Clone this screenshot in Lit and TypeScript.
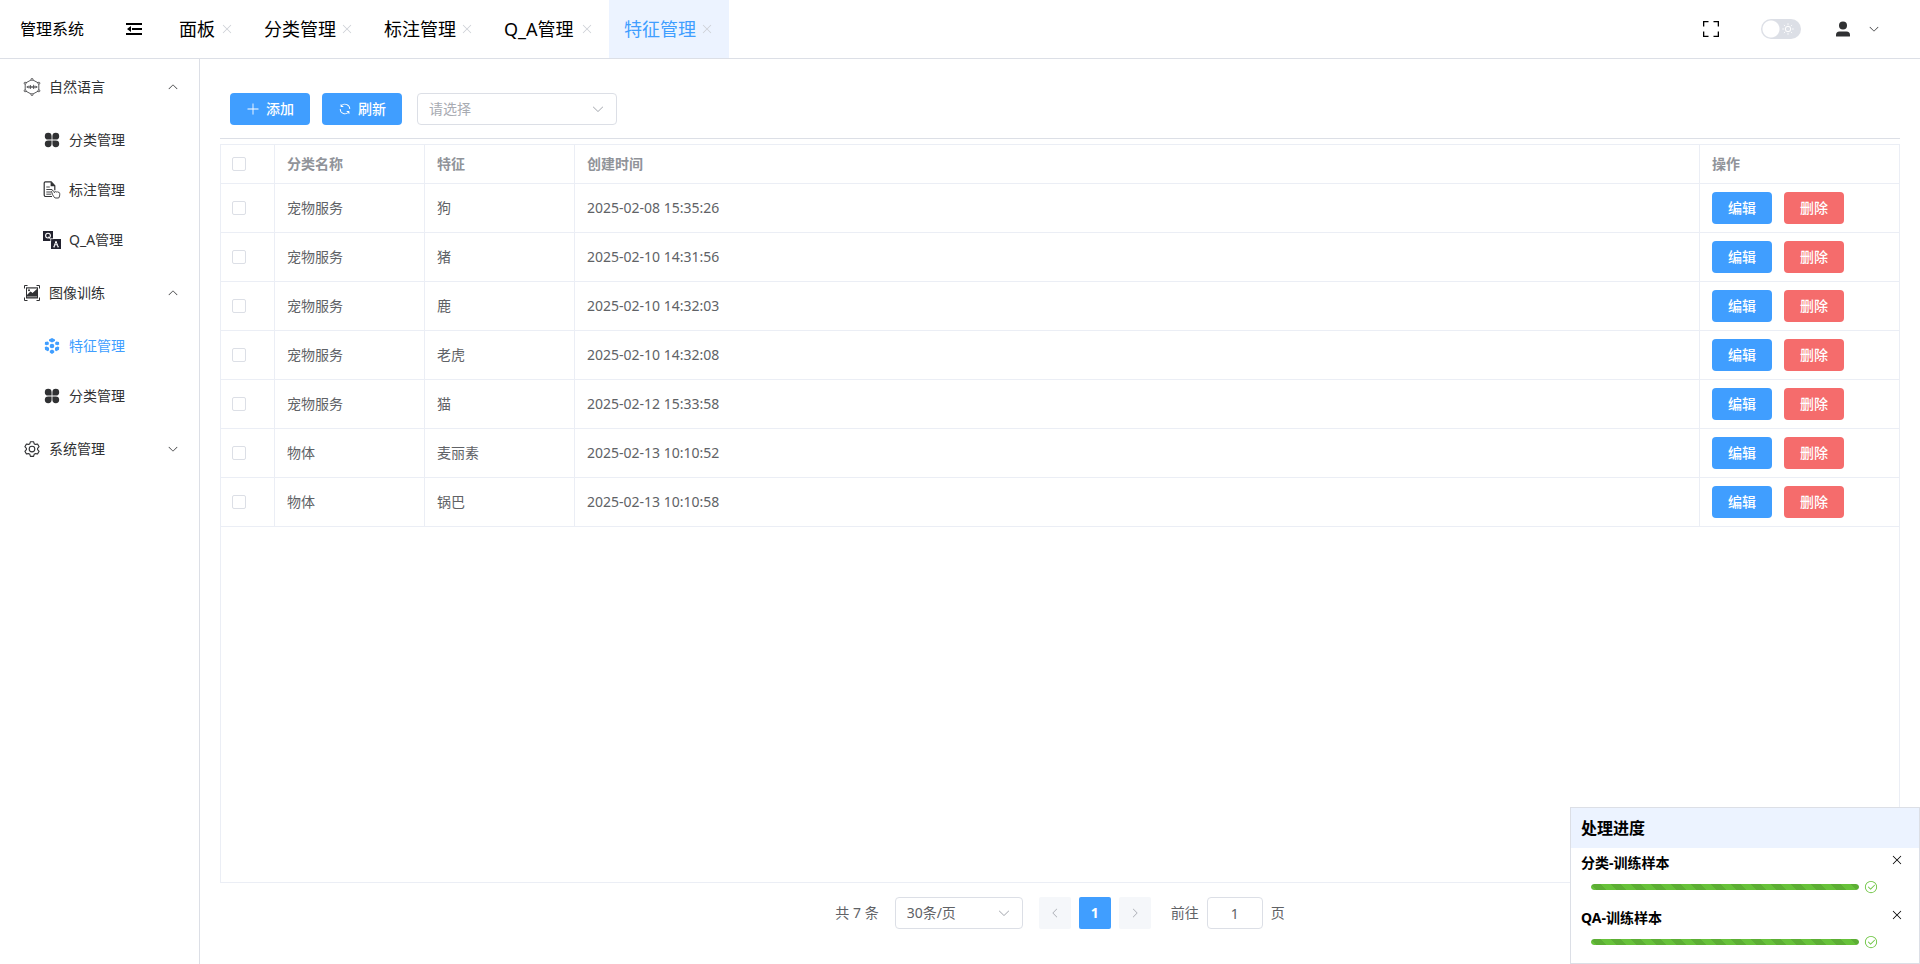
import { LitElement, html, css, svg, nothing, type TemplateResult } from "lit";
import { customElement, property, state } from "lit/decorators.js";

const ICONS: Record<string, { box: string; body: TemplateResult }> = {
  plus: { box: "0 0 1024 1024", body: svg`<path d="M480 480V128a32 32 0 0 1 64 0v352h352a32 32 0 1 1 0 64H544v352a32 32 0 1 1-64 0V544H128a32 32 0 0 1 0-64h352z"/>` },
  refresh: { box: "0 0 1024 1024", body: svg`<path d="M771.776 794.88A384 384 0 0 1 128 512h64a320 320 0 0 0 555.712 216.448H654.72a32 32 0 1 1 0-64h149.056a32 32 0 0 1 32 32v148.928a32 32 0 1 1-64 0v-50.56zM276.288 295.616h92.992a32 32 0 0 1 0 64H220.16a32 32 0 0 1-32-32V178.56a32 32 0 0 1 64 0v50.56A384 384 0 0 1 896.128 512h-64a320 320 0 0 0-555.776-216.384z"/>` },
  down: { box: "0 0 1024 1024", body: svg`<path d="M831.872 340.864 512 652.672 192.128 340.864a30.592 30.592 0 0 0-42.752 0 29.12 29.12 0 0 0 0 41.6L489.664 714.24a32 32 0 0 0 44.672 0l340.288-331.712a29.12 29.12 0 0 0 0-41.728 30.592 30.592 0 0 0-42.752 0z"/>` },
  up: { box: "0 0 1024 1024", body: svg`<path d="M831.872 683.136 512 371.328 192.128 683.136a30.592 30.592 0 0 1-42.752 0 29.12 29.12 0 0 1 0-41.6L489.664 309.76a32 32 0 0 1 44.672 0l340.288 331.712a29.12 29.12 0 0 1 0 41.728 30.592 30.592 0 0 1-42.752 0z"/>` },
  left: { box: "0 0 1024 1024", body: svg`<path d="M683.136 831.872 371.328 512 683.136 192.128a30.592 30.592 0 0 0 0-42.752 29.12 29.12 0 0 0-41.6 0L309.76 489.664a32 32 0 0 0 0 44.672l331.712 340.288a29.12 29.12 0 0 0 41.728 0 30.592 30.592 0 0 0 0-42.752z"/>` },
  right: { box: "0 0 1024 1024", body: svg`<path d="M340.864 831.872 652.672 512 340.864 192.128a30.592 30.592 0 0 1 0-42.752 29.12 29.12 0 0 1 41.6 0L714.24 489.664a32 32 0 0 1 0 44.672L382.528 874.624a29.12 29.12 0 0 1-41.728 0 30.592 30.592 0 0 1 0-42.752z"/>` },
  close: { box: "0 0 1024 1024", body: svg`<path d="M764.288 214.592 512 466.88 259.712 214.592a31.936 31.936 0 0 0-45.12 45.12L466.752 512 214.528 764.224a31.936 31.936 0 1 0 45.12 45.184L512 557.184l252.288 252.288a31.936 31.936 0 0 0 45.12-45.12L557.12 512.064l252.288-252.352a31.936 31.936 0 1 0-45.12-45.184z"/>` },
  check: { box: "0 0 1024 1024", body: svg`<path d="M512 896a384 384 0 1 0 0-768 384 384 0 0 0 0 768m0 64a448 448 0 1 1 0-896 448 448 0 0 1 0 896"/><path d="M745.344 361.344a32 32 0 0 1 45.312 45.312l-288 288a32 32 0 0 1-45.312 0l-160-160a32 32 0 1 1 45.312-45.312L480 626.752z"/>` },
  setting: { box: "0 0 1024 1024", body: svg`<path d="M600.704 64a32 32 0 0 1 30.464 22.208l35.2 109.376c14.784 7.232 28.928 15.36 42.432 24.512l112.384-24.192a32 32 0 0 1 34.432 15.36L944.32 364.8a32 32 0 0 1-4.032 37.504l-77.12 85.12a357.12 357.12 0 0 1 0 49.024l77.12 85.248a32 32 0 0 1 4.032 37.504l-88.704 153.6a32 32 0 0 1-34.432 15.296L708.8 803.904c-13.44 9.088-27.648 17.28-42.368 24.512l-35.264 109.376A32 32 0 0 1 600.704 960H423.296a32 32 0 0 1-30.464-22.208L357.696 828.48a351.616 351.616 0 0 1-42.56-24.64l-112.32 24.256a32 32 0 0 1-34.432-15.36L79.68 659.2a32 32 0 0 1 4.032-37.504l77.12-85.248a357.12 357.12 0 0 1 0-48.896l-77.12-85.248A32 32 0 0 1 79.68 364.8l88.704-153.6a32 32 0 0 1 34.432-15.296l112.32 24.256c13.568-9.152 27.776-17.408 42.56-24.64l35.2-109.312A32 32 0 0 1 423.232 64H600.64zm-23.424 64H446.72l-36.352 113.088-24.512 11.968a294.113 294.113 0 0 0-34.816 20.096l-22.656 15.36-116.224-25.088-65.28 113.152 79.68 88.192-1.92 27.136a293.12 293.12 0 0 0 0 40.192l1.92 27.136-79.808 88.192 65.344 113.152 116.224-25.024 22.656 15.296a294.113 294.113 0 0 0 34.816 20.096l24.512 11.968L446.72 896h130.688l36.48-113.152 24.448-11.904a288.282 288.282 0 0 0 34.752-20.096l22.592-15.296 116.288 25.024 65.28-113.152-79.744-88.192 1.92-27.136a293.12 293.12 0 0 0 0-40.256l-1.92-27.136 79.808-88.128-65.344-113.152-116.288 24.96-22.592-15.232a287.616 287.616 0 0 0-34.752-20.096l-24.448-11.904L577.344 128zM512 320a192 192 0 1 1 0 384 192 192 0 0 1 0-384zm0 64a128 128 0 1 0 0 256 128 128 0 0 0 0-256z"/>` },
  fold: { box: "0 0 16 16", body: svg`<path d="M0 2h16v2H0zM6 7h10v2H6zM0 12h16v2H0zM1 8l4-3v6z"/>` },
  fullscreen: { box: "0 0 16 16", body: svg`<path d="M0 0h5.500v1.300H1.300V5.500H0zM10.500 0H16v5.500h-1.300V1.300h-4.200zM0 10.500h1.300v4.200h4.200V16H0zM14.700 10.500H16V16h-5.500v-1.300h4.200z"/>` },
  user: { box: "0 0 16 16", body: svg`<circle cx="8" cy="4.500" r="4"/><path d="M4.500 10.500h7A3.500 3.500 0 0 1 15 14v1a.6.6 0 0 1-.6.600H1.600A.6.6 0 0 1 1 15v-1a3.500 3.500 0 0 1 3.500-3.500z"/>` },
  sunny: { box: "0 0 12 12", body: svg`<circle cx="6" cy="6" r="2.700" fill="none" stroke="currentColor"/><path d="M6 .6v1.200M6 10.200v1.200M.6 6h1.200M10.200 6h1.200M2.200 2.200l.8.8M9 9l.8.8M2.200 9.800l.8-.8M9 3l.8-.8" stroke="currentColor" stroke-linecap="round" stroke-width=".8"/>` },
  language: { box: "0 0 18 18", body: svg`<path d="M9 1.500 15.800 5.200v7.600L9 16.500 2.200 12.800V5.200z" fill="none" stroke="currentColor" stroke-width=".8"/><g fill="#fff" stroke="currentColor" stroke-width=".7"><circle cx="9" cy="1.400" r="1"/><circle cx="15.900" cy="5.200" r="1"/><circle cx="15.900" cy="12.800" r="1"/><circle cx="9" cy="16.600" r="1"/><circle cx="2.100" cy="12.800" r="1"/><circle cx="2.100" cy="5.200" r="1"/></g><path d="M4.500 8.200v1.600M6 7.500v3M7.500 7v4M9 8v2M10.500 6.800v4.200M12 7.600v2.800M13.500 8.200v1.600" stroke="currentColor" stroke-width=".7"/><path d="M3.500 9h11" stroke="currentColor" stroke-width=".7"/>` },
  clover: { box: "0 0 16 16", body: svg`<path d="M4.200.8a3.400 3.400 0 0 1 3.400 3.400v3.400H4.200a3.400 3.400 0 0 1 0-6.800zM11.800.8a3.400 3.400 0 0 1 0 6.800H8.400V4.200A3.400 3.400 0 0 1 11.800.8zM4.200 8.400h3.400v3.400a3.400 3.400 0 1 1-3.400-3.400zM8.400 8.400h3.400a3.400 3.400 0 1 1-3.400 3.400z"/>` },
  document: { box: "0 0 18 18", body: svg`<path d="M9 15.500H2.700A1.500 1.500 0 0 1 1.200 14V2A1.200 1.200 0 0 1 2.400.8h5.800l3.600 4v4.500" fill="none" stroke="currentColor" stroke-width="1.200"/><path d="M7.600.8v4.400h4.400z"/><path d="M3.300 6h3.500M3.300 8.500h6M3.300 11h4.700M3.300 13.200h5" stroke="currentColor" stroke-width=".9"/><path d="M9 9.800c.7-.6 1.500-.1 1.800.6l.6 1.200c.2-1 1.300-1.300 1.900-.5.500-.6 1.300-.5 1.700.2.900-.3 1.600.2 1.700 1.200.2 1.700-.2 3.200-1 4.500h-3.600c-1.200-1-2-2.300-2.600-3.600l-.8-2.200c-.3-.6-.1-1.100.3-1.400z" fill="#fff" stroke="currentColor" stroke-width=".9"/>` },
  qa: { box: "0 0 18 18", body: svg`<path d="M0 0h10v10H0zM8 8h10v10H8z" fill="#22222e"/><path d="M7.700 10.500V7.700h2.800" fill="none" stroke="#fff" stroke-width=".7"/><circle cx="5" cy="4.600" r="2.400" fill="none" stroke="#fff" stroke-width="1.100"/><path d="m5 5.800 2.500 2M10.300 15.800h1.700M14.200 15.800h1.700M11 15.500l2-5.300 2 5.300M11.800 13.800h2.500" fill="none" stroke="#fff"/>` },
  image: { box: "0 0 16 16", body: svg`<path d="M.5 3.500v-3h3M12.500.5h3v3M15.500 12.500v3h-3M3.500 15.500h-3v-3" fill="none" stroke="currentColor"/><path d="M2 2.300h12v11.200H2z"/><path d="M3.200 11.600 6.500 7.800 8.300 9l4.300-4.300" fill="none" stroke="#fff" stroke-width="1.100"/><path d="M3 3.400h10v1L8.400 8.200 6.600 6.800 3 10.500z" fill="#fff"/><circle cx="5" cy="5.300" r="1"/><path d="M2.500 10.500 6.500 6.500l2 1.500L13.500 3.500v9.500h-11z"/><path d="M3 11.800h10" stroke="#fff" stroke-width=".6"/>` },
  cube: { box: "0 0 16 16", body: svg`<circle cx="8" cy="8" r="2.300"/><path d="m8 0 3 1.500v1.600L8 4.600 5 3.100V1.500zM8 11.600l2.200 1.100v1.800L8 16l-2.200-1.500v-1.800zM1 4l2.600-.6 1.200 1v2L2.500 7.200.8 6.400zM15 4l-2.600-.6-1.200 1v2l2.300.8 1.700-.8zM.8 9l1.800-.5L5 9.800v2.400l-1.200 1L1 11.800zM15.200 9l-1.800-.5L11 9.800v2.400l1.200 1 2.800-1.400z"/>` },
};

@customElement("ui-icon")
export class UiIcon extends LitElement {
  static styles = css`
    :host { display: inline-flex; flex: none; width: 14px; height: 14px; }
    svg { width: 100%; height: 100%; display: block; fill: currentColor; }
  `;
  @property() name = "";
  render() {
    const icon = ICONS[this.name];
    return icon ? html`<svg viewBox=${icon.box} aria-hidden="true">${icon.body}</svg>` : nothing;
  }
}

const TABS = ["面板", "分类管理", "标注管理", "Q_A管理", "特征管理"];

const MENU = [
  { icon: "language", label: "自然语言", open: true, large: true, items: [
    { icon: "clover", label: "分类管理" },
    { icon: "document", label: "标注管理", large: true },
    { icon: "qa", label: "Q_A管理", large: true },
  ] },
  { icon: "image", label: "图像训练", open: true, items: [
    { icon: "cube", label: "特征管理", active: true },
    { icon: "clover", label: "分类管理" },
  ] },
  { icon: "setting", label: "系统管理", open: false, large: true, items: [] },
] as { icon: string; label: string; open: boolean; large?: boolean; items: { icon: string; label: string; large?: boolean; active?: boolean }[] }[];

const ROWS = [
  ["宠物服务", "狗", "2025-02-08 15:35:26"],
  ["宠物服务", "猪", "2025-02-10 14:31:56"],
  ["宠物服务", "鹿", "2025-02-10 14:32:03"],
  ["宠物服务", "老虎", "2025-02-10 14:32:08"],
  ["宠物服务", "猫", "2025-02-12 15:33:58"],
  ["物体", "麦丽素", "2025-02-13 10:10:52"],
  ["物体", "锅巴", "2025-02-13 10:10:58"],
];

@customElement("app-root")
export class AppRoot extends LitElement {
  static styles = css`
    :host {
      display: flex; flex-direction: column; min-height: 100vh; background: #fff; color: #303133;
      font: 14px/20px "Noto Sans", "Noto Sans CJK SC", sans-serif;
    }
    * { box-sizing: border-box; }
    button, input, select { font: inherit; color: inherit; margin: 0; }
    button { border: 0; padding: 0; background: none; cursor: pointer; display: inline-flex; align-items: center; justify-content: center; }
    a { color: inherit; text-decoration: none; }

    .header { display: flex; height: 59px; border-bottom: 1px solid #dcdfe6; color: #000; }
    .brand { display: flex; align-items: center; width: 125px; padding-left: 20px; font-size: 16px; }
    .fold { width: 18px; margin-right: 21px; }
    .fold ui-icon { width: 16px; height: 16px; }
    .tabs { display: flex; flex: 1; font-size: 18px; }
    .tab { display: flex; align-items: center; justify-content: space-between; gap: 5px; padding: 0 15px; }
    .tab:not(:first-child) { min-width: 120px; gap: 4px; }
    .tab.active { background: #ecf3ff; color: #409eff; }
    .tab button { color: #cdd0d6; }
    .tools { display: flex; align-items: center; padding-right: 40px; }
    .full ui-icon { width: 16px; height: 16px; }
    .switch { appearance: none; width: 40px; height: 20px; margin: 0; border-radius: 10px; background: radial-gradient(circle at 10px 10px, #fff 8px, transparent 9px) #dcdfe6; }
    .switch-wrap { position: relative; display: flex; margin: 0 34px 0 42px; }
    .switch-wrap ui-icon { position: absolute; right: 7px; top: 4px; width: 12px; height: 12px; color: #fff; pointer-events: none; }
    .account { gap: 17px; color: #303133; }
    .account ui-icon:first-child { width: 16px; height: 16px; }
    .account ui-icon:last-child { width: 12px; height: 12px; }

    .body { display: flex; flex: 1; }
    .side { width: 200px; flex: none; border-right: 1px solid #dcdfe6; }
    .side ul { margin: 0; padding: 0; list-style: none; }
    .group { width: 100%; height: 56px; padding: 0 20px; gap: 5px; justify-content: flex-start; }
    .group .arrow { width: 12px; height: 12px; margin-left: auto; }
    .item { display: flex; align-items: center; gap: 5px; height: 50px; padding-left: 40px; }
    .item.active { color: #409eff; }
    .slot { display: flex; justify-content: center; width: 24px; }
    .slot ui-icon { width: 16px; height: 16px; }
    .slot ui-icon.large { width: 18px; height: 18px; }

    .main { display: flex; flex-direction: column; flex: 1; min-width: 0; padding: 34px 20px 35px; }
    .toolbar { display: flex; padding: 0 10px 13px; border-bottom: 1px solid #dcdfe6; margin-bottom: 5px; }
    .btn { height: 32px; border-radius: 4px; color: #fff; font-weight: 500; background: #409eff; }
    .toolbar .btn { width: 80px; gap: 6px; margin-right: 12px; }
    .danger { background: #f56c6c; }
    .select { position: relative; display: flex; width: 200px; height: 32px; }
    .toolbar .select { margin-left: 3px; color: #a8abb2; }
    .select select { appearance: none; width: 100%; border: 1px solid #dcdfe6; border-radius: 4px; background: #fff; padding: 0 11px; }
    .select ui-icon { position: absolute; right: 12px; top: 9px; color: #a8abb2; pointer-events: none; }

    .panel { flex: 1; border: 1px solid #ebeef5; }
    table { width: 100%; border-collapse: separate; border-spacing: 0; table-layout: fixed; }
    th, td { text-align: left; padding: 0 12px; border-bottom: 1px solid #ebeef5; border-right: 1px solid #ebeef5; }
    th:last-child, td:last-child { border-right: 0; }
    th { height: 39px; color: #909399; font-weight: 700; }
    td { height: 49px; color: #606266; }
    .c-check { width: 54px; }
    .c-name { width: 150px; }
    .c-ops { width: 199px; }
    .pick { padding: 0 11px; }
    .box { appearance: none; display: block; width: 14px; height: 14px; border: 1px solid #dcdfe6; border-radius: 2px; background: #fff; }
    .ops { display: flex; gap: 12px; }
    .ops .btn { width: 60px; }

    .pager { display: flex; align-items: center; justify-content: center; padding-top: 14px; color: #606266; }
    .pager .select { width: 128px; margin: 0 16px; }
    .pages { display: flex; gap: 8px; margin-right: 20px; }
    .pages button { width: 32px; height: 32px; border-radius: 2px; background: #f5f7fa; color: #a8abb2; }
    .pages .current { background: #409eff; color: #fff; font-weight: 700; }
    .pages ui-icon { width: 12px; height: 12px; }
    .jump { display: flex; align-items: center; gap: 8px; }
    .jump input { width: 56px; height: 32px; border: 1px solid #dcdfe6; border-radius: 4px; text-align: center; padding: 0 11px; background: #fff; }

    .progress { position: fixed; right: 0; bottom: 0; width: 350px; border: 1px solid #dcdfe6; background: #fff; color: #000; padding-bottom: 5px; }
    .progress h2 { display: flex; align-items: center; height: 40px; margin: 0; padding: 0 10px; background: #ecf3ff; font-size: 16px; font-weight: 700; }
    .task { height: 55px; padding: 5px 10px 0; }
    .task-head { display: flex; justify-content: space-between; font-weight: 700; height: 20px; }
    .task-head button { width: 16px; height: 14px; margin-right: 4px; }
    .task-head ui-icon { width: 14px; height: 14px; }
    .meter { display: flex; align-items: center; gap: 5px; padding: 7px 31px 0 10px; color: #67c23a; }
    .track { flex: 1; height: 6px; border-radius: 3px; background: #ebeef5; overflow: hidden; }
    .bar { height: 100%; border-radius: 3px; background: linear-gradient(45deg, rgba(0,0,0,.1) 25%, transparent 25%, transparent 50%, rgba(0,0,0,.1) 50%, rgba(0,0,0,.1) 75%, transparent 75%) 0 0 / 20px 20px #67c23a; }
  `;

  @state() private active = 4;

  private renderMenu() {
    return MENU.map((g) => html`<li>
      <button class="group" aria-expanded=${g.open}>
        <span class="slot"><ui-icon name=${g.icon} class=${g.large ? "large" : ""}></ui-icon></span>${g.label}
        <ui-icon class="arrow" name=${g.open ? "up" : "down"}></ui-icon>
      </button>
      ${g.items.length ? html`<ul>${g.items.map((i) => html`<li><a class="item ${i.active ? "active" : ""}" href="#">
        <span class="slot"><ui-icon name=${i.icon} class=${i.large ? "large" : ""}></ui-icon></span>${i.label}</a></li>`)}</ul>` : nothing}
    </li>`);
  }

  private renderTable() {
    return html`<table>
      <thead><tr>
        <th class="c-check pick"><input class="box" type="checkbox" aria-label="全选"></th>
        <th class="c-name">分类名称</th><th class="c-name">特征</th><th>创建时间</th><th class="c-ops">操作</th>
      </tr></thead>
      <tbody>${ROWS.map((r) => html`<tr>
        <td class="pick"><input class="box" type="checkbox" aria-label=${r[1]}></td>
        <td>${r[0]}</td><td>${r[1]}</td><td>${r[2]}</td>
        <td><div class="ops"><button class="btn">编辑</button><button class="btn danger">删除</button></div></td>
      </tr>`)}</tbody>
    </table>`;
  }

  private renderTask(name: string, percent: number) {
    return html`<div class="task">
      <div class="task-head"><span>${name}</span><button aria-label="关闭"><ui-icon name="close"></ui-icon></button></div>
      <div class="meter">
        <div class="track" role="progressbar" aria-label=${name} aria-valuenow=${percent}><div class="bar" style="width:${percent}%"></div></div>
        <ui-icon name="check"></ui-icon>
      </div>
    </div>`;
  }

  render() {
    return html`
      <header class="header">
        <div class="brand">管理系统</div>
        <button class="fold" aria-label="折叠菜单"><ui-icon name="fold"></ui-icon></button>
        <nav class="tabs">${TABS.map((t, i) => html`<div class="tab ${i === this.active ? "active" : ""}">
          <a href="#" @click=${(e: Event) => { e.preventDefault(); this.active = i; }}>${t}</a>
          <button aria-label="关闭"><ui-icon name="close"></ui-icon></button></div>`)}</nav>
        <div class="tools">
          <button class="full" aria-label="全屏"><ui-icon name="fullscreen"></ui-icon></button>
          <label class="switch-wrap"><input class="switch" type="checkbox" role="switch" aria-label="深色模式"><ui-icon name="sunny"></ui-icon></label>
          <button class="account" aria-label="用户"><ui-icon name="user"></ui-icon><ui-icon name="down"></ui-icon></button>
        </div>
      </header>
      <div class="body">
        <nav class="side"><ul>${this.renderMenu()}</ul></nav>
        <main class="main">
          <div class="toolbar">
            <button class="btn"><ui-icon name="plus"></ui-icon>添加</button>
            <button class="btn"><ui-icon name="refresh"></ui-icon>刷新</button>
            <div class="select"><select aria-label="分类"><option>请选择</option></select><ui-icon name="down"></ui-icon></div>
          </div>
          <div class="panel">${this.renderTable()}</div>
          <div class="pager">
            <span>共 7 条</span>
            <div class="select"><select aria-label="每页条数"><option>30条/页</option></select><ui-icon name="down"></ui-icon></div>
            <div class="pages">
              <button disabled aria-label="上一页"><ui-icon name="left"></ui-icon></button>
              <button class="current">1</button>
              <button disabled aria-label="下一页"><ui-icon name="right"></ui-icon></button>
            </div>
            <label class="jump">前往<input type="text" .value=${"1"}>页</label>
          </div>
        </main>
      </div>
      <section class="progress" aria-label="处理进度">
        <h2>处理进度</h2>
        ${this.renderTask("分类-训练样本", 100)}
        ${this.renderTask("QA-训练样本", 100)}
      </section>`;
  }
}
